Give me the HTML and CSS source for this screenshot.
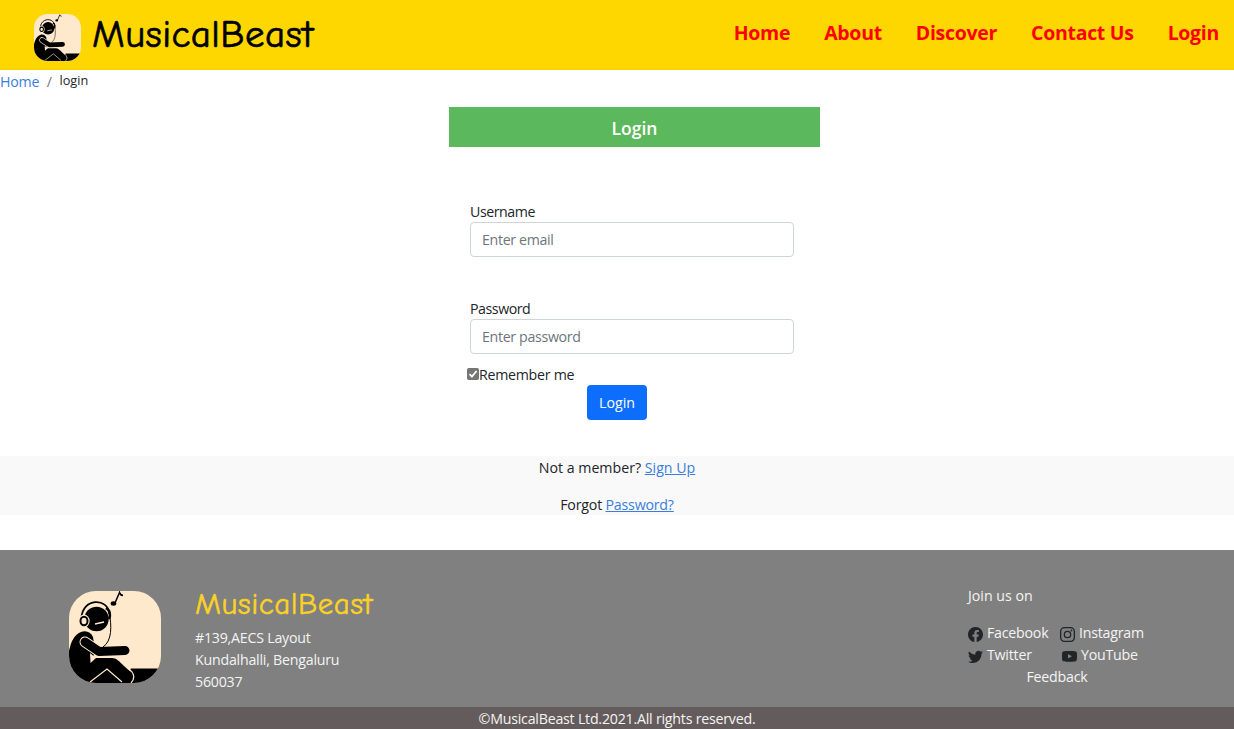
FILE: index.html
```html
<!DOCTYPE html>
<html lang="en">
<head>
<meta charset="utf-8">
<title>MusicalBeast - Login</title>
<link rel="stylesheet" href="styles.css">
</head>
<body>
<svg class="defs" width="0" height="0">
  <defs>
    <clipPath id="tile"><rect width="92" height="92" rx="27"/></clipPath>
    <symbol id="logo" viewBox="0 0 92 92">
      <g clip-path="url(#tile)">
        <rect width="92" height="92" fill="#ffe9cc"/>
        <path d="M62 77.500H92V92H54Z"/>
        <path d="M0 92V60C2 50 6 43 12 41C17 39 22 41 24 46L26 58L24 67H43C47 67 50 70 53 73L64 83L66 92Z"/>
        <path d="M21 62L27 67L21.500 72Z" fill="#ffe9cc"/>
        <path d="M16 51L30 60.500L56 59.500" fill="none" stroke="#ffe9cc" stroke-width="11" stroke-linecap="round" stroke-linejoin="round"/>
        <path d="M16 51L30 60.500L56 59.500" fill="none" stroke="#000" stroke-width="9" stroke-linecap="round" stroke-linejoin="round"/>
        <path d="M21 91L38 78L53 91M54 73L63 81Q67 86 62 92" fill="none" stroke="#ffe9cc" stroke-width="1.200"/>
        <circle cx="27.500" cy="28" r="12.200"/>
        <path d="M12.500 27C13 7 39 6 40.500 23" fill="none" stroke="#000" stroke-width="1.800"/>
        <path d="M37 17Q43 21 40 28" fill="none" stroke="#000" stroke-width="2.500"/>
        <path d="M40 21C43 35 43 50 34 56" fill="none" stroke="#000" stroke-width="1"/>
        <ellipse cx="15" cy="30" rx="5.700" ry="6.500" fill="#ffe9cc"/>
        <ellipse cx="15" cy="30" rx="3.500" ry="4.300" fill="#ffe9cc" stroke="#000" stroke-width="2"/>
        <path d="M26 33L35 31" stroke="#ffe9cc" stroke-width="1.300"/>
        <ellipse cx="44.500" cy="12.500" rx="2.800" ry="2.200"/>
        <path d="M46 12L50.500 1.500Q51 4 54 4.500" fill="none" stroke="#000" stroke-width="1.500"/>
      </g>
    </symbol>
  </defs>
</svg>

<header class="navbar">
  <a class="brand"><svg class="brand-logo"><use href="#logo"/></svg><span class="brand-name">MusicalBeast</span></a>
  <nav class="nav-links"><a>Home</a><a>About</a><a>Discover</a><a>Contact Us</a><a>Login</a></nav>
</header>

<div class="breadcrumb"><a class="crumb-link">Home</a><span class="crumb-sep">/</span><span class="crumb-here">login</span></div>

<main class="login">
  <h1 class="login-title">Login</h1>
  <form class="login-form">
    <label class="field"><span>Username</span><input class="control" type="text" placeholder="Enter email"></label>
    <label class="field"><span>Password</span><input class="control" type="password" placeholder="Enter password"></label>
    <div class="remember">
      <svg class="check" viewBox="0 0 12 12"><rect width="12" height="12" rx="1.800" fill="#767676"/><path d="M2.500 6.200L4.900 8.600L9.600 3" fill="none" stroke="#fff" stroke-width="1.800"/></svg><span>Remember me</span>
    </div>
    <button class="submit" type="button">Login</button>
  </form>
</main>

<section class="help">
  <p>Not a member? <a>Sign Up</a></p>
  <p class="forgot">Forgot <a>Password?</a></p>
</section>

<footer class="footer">
  <div class="footer-main">
    <svg class="footer-logo"><use href="#logo"/></svg>
    <div class="address">
      <h2 class="footer-name">MusicalBeast</h2>
      <p>#139,AECS Layout</p>
      <p>Kundalhalli, Bengaluru</p>
      <p>560037</p>
    </div>
    <div class="social">
      <p class="join">Join us on</p>
      <div class="social-grid">
        <a><svg class="icon" viewBox="0 0 16 16"><path d="M16 8.049c0-4.446-3.582-8.050-8-8.050C3.580 0-.002 3.603-.002 8.050c0 4.017 2.926 7.347 6.750 7.951v-5.625h-2.030V8.050H6.750V6.275c0-2.017 1.195-3.131 3.022-3.131.876 0 1.791.157 1.791.157v1.980h-1.009c-.993 0-1.303.621-1.303 1.258v1.510h2.218l-.354 2.326H9.250V16c3.824-.604 6.750-3.934 6.750-7.951z"/></svg><span>Facebook</span></a>
        <a><svg class="icon" viewBox="0 0 16 16"><rect x=".7" y=".7" width="14.600" height="14.600" rx="4" fill="none" stroke="#212529" stroke-width="1.400"/><circle cx="8" cy="8" r="3.400" fill="none" stroke="#212529" stroke-width="1.400"/><circle cx="12.270" cy="3.730" r=".96"/></svg><span>Instagram</span></a>
        <a><svg class="icon" viewBox="0 0 16 16"><path d="M5.026 15c6.038 0 9.341-5.003 9.341-9.334 0-.140 0-.282-.006-.422A6.685 6.685 0 0 0 16 3.542a6.658 6.658 0 0 1-1.889.518 3.301 3.301 0 0 0 1.447-1.817 6.533 6.533 0 0 1-2.087.793A3.286 3.286 0 0 0 7.875 6.030a9.325 9.325 0 0 1-6.767-3.429 3.289 3.289 0 0 0 1.018 4.382A3.323 3.323 0 0 1 .64 6.575v.045a3.288 3.288 0 0 0 2.632 3.218 3.203 3.203 0 0 1-.865.115 3.230 3.230 0 0 1-.614-.057 3.283 3.283 0 0 0 3.067 2.277A6.600 6.600 0 0 1 .78 13.580a6.320 6.320 0 0 1-.78-.045A9.344 9.344 0 0 0 5.026 15z"/></svg><span>Twitter</span></a>
        <a class="youtube"><svg class="icon" viewBox="0 0 16 16"><path d="M8 2C3 2 1.400 2.200.7 3C0 4 0 6 0 7.700C0 10 0 11.500.7 12.500C1.400 13.300 3 13.500 8 13.500S14.600 13.300 15.300 12.500C16 11.500 16 10 16 7.700S16 4 15.300 3C14.600 2.200 13 2 8 2ZM6.400 5.300L10.600 7.700L6.400 10.200Z" fill-rule="evenodd"/></svg><span>YouTube</span></a>
      </div>
      <p class="feedback">Feedback</p>
    </div>
  </div>
  <div class="copyright"><span>©MusicalBeast Ltd.2021.All rights reserved.</span></div>
</footer>
</body>
</html>
```
FILE: styles.css
```css
* { box-sizing: border-box; }
body {
  margin: 0;
  background: #fff;
  color: #212529;
  font: 14.200px/22px "Segoe UI", "Open Sans", "Noto Sans", sans-serif;
}
p, h1, h2 { margin: 0; font-weight: 400; }
.defs { display: block; }
.navbar {
  display: flex;
  justify-content: space-between;
  height: 70px;
  padding: 0 15px 0 34px;
  background: #ffd700;
}
.brand { display: flex; color: #000; }
.brand-logo { width: 47px; height: 47px; margin-top: 14px; }
.brand-name {
  margin-left: 11px;
  font: 39px/69px "Comic Sans MS", "Comic Neue", "Noto Sans", cursive;
  letter-spacing: 0.450px;
  -webkit-text-stroke: 0.700px currentColor;
  white-space: nowrap;
}
.nav-links {
  display: flex;
  gap: 34px;
  color: #f00;
  font-size: 19.500px;
  font-weight: 700;
  letter-spacing: -0.300px;
  line-height: 66px;
}
.breadcrumb { display: flex; height: 37px; line-height: 24px; }
.crumb-link { color: #3b7ddd; letter-spacing: -0.200px; }
.crumb-sep { margin: 0 7.500px; color: #6c757d; }
.crumb-here { font-size: 12.700px; line-height: 21px; }
.login { width: 371px; height: 349px; margin-left: 449px; }
.login-title {
  height: 40px;
  background: #5cb85c;
  color: #fff;
  font-size: 17.500px;
  font-weight: 600;
  line-height: 42px;
  text-align: center;
}
.login-form { padding: 53px 26px 0 21px; }
.field { display: block; height: 97px; letter-spacing: -0.450px; }
.field span { display: block; line-height: 24px; height: 22px; }
.control {
  display: block;
  width: 324px;
  height: 35px;
  padding: 0 11px;
  border: 1px solid #ced4da;
  border-radius: 4px;
  font: inherit;
  letter-spacing: -0.330px;
}
.control::placeholder { color: #6c757d; opacity: 1; }
.field + .field { height: 71px; }
.remember {
  display: flex;
  height: 17px;
  margin-left: -3px;
  letter-spacing: -0.270px;
  line-height: 13px;
}
.check { width: 12px; height: 12px; }
.submit {
  display: block;
  width: 60px;
  height: 35px;
  margin-left: 117px;
  padding: 1px 0 0;
  border: 0;
  border-radius: 4px;
  background: #0d6efd;
  color: #fff;
  font: inherit;
}
.help {
  display: flex;
  flex-direction: column;
  gap: 15px;
  height: 59px;
  background: #f9f9f9;
  line-height: 22px;
  padding-top: 1px;
  text-align: center;
}
.forgot { height: 21px; letter-spacing: -0.200px; }
.help a { color: #3b7ddd; text-decoration: underline; }
.footer { margin-top: 35px; color: #f4f4f4; letter-spacing: -0.220px; }
.footer-main { display: flex; height: 157px; padding-left: 69px; background: #808080; }
.footer-logo { width: 92px; height: 92px; margin-top: 41px; }
.address { width: 300px; margin-left: 34px; padding-top: 36px; }
.footer-name {
  height: 41px;
  color: #fbd224;
  font: 31px/36px "Comic Sans MS", "Comic Neue", "Noto Sans", cursive;
  letter-spacing: 0.500px;
  -webkit-text-stroke: 0.500px currentColor;
}
.social { width: 180px; margin-left: 473px; padding-top: 35px; }
.join { height: 37px; letter-spacing: 0; }
.social-grid { display: grid; grid-template-columns: 92px 88px; line-height: 22px; }
.social-grid a { display: flex; gap: 4px; }
.social-grid .youtube { padding-left: 2px; }
.icon { width: 15px; height: 15px; margin-top: 5px; fill: #212529; }
.feedback { margin-left: 58.500px; }
.copyright { height: 22px; background: #645c5c; line-height: 23px; text-align: center; }
```
